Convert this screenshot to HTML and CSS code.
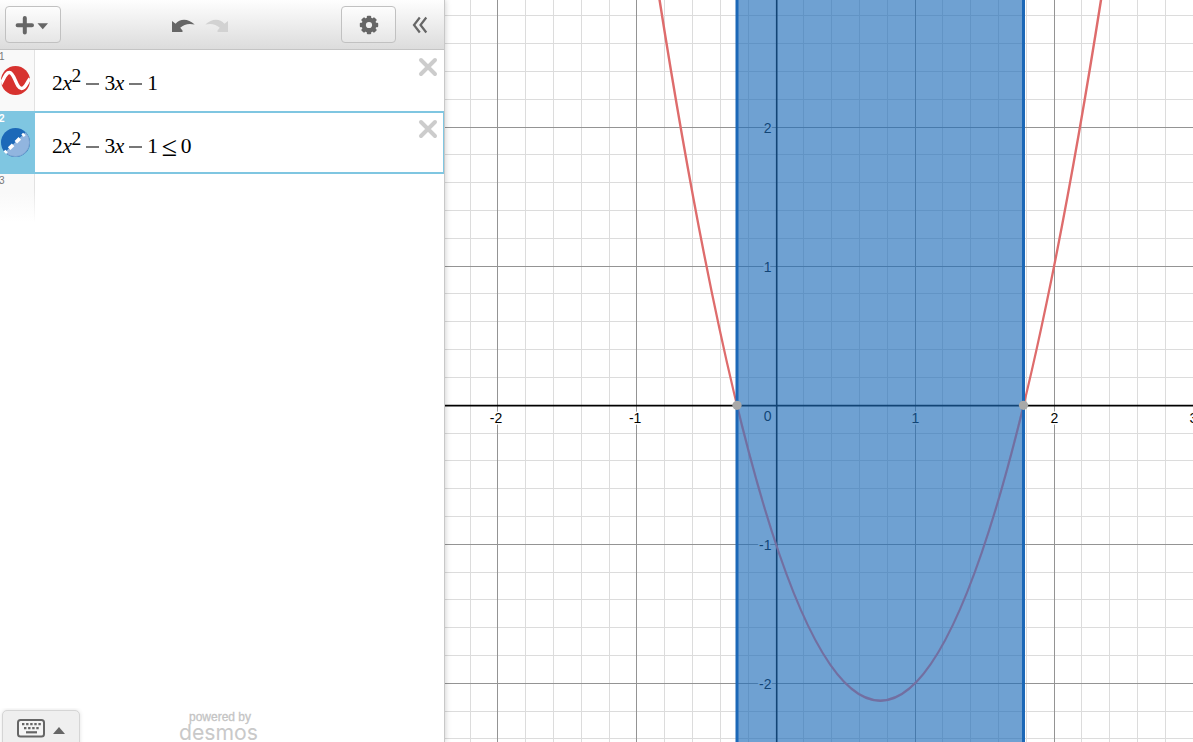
FILE: index.html
```html
<!DOCTYPE html>
<html lang="en">
<head>
<meta charset="utf-8">
<title>Graphing Calculator</title>
<link rel="stylesheet" href="styles.css">
</head>
<body>
<main class="app">
  <aside class="panel">
    <header class="toolbar">
      <button class="btn add" aria-label="Add item">
        <svg width="34" height="20" viewBox="0 0 34 20"><path d="M9.800 3v14.400M2.600 10.200h14.400" stroke="#666" stroke-width="4" stroke-linecap="round" fill="none"/><path d="M22.500 8.200h10.500l-5.250 6z" fill="#666"/></svg>
      </button>
      <div class="history">
        <svg width="23" height="14" viewBox="0 0 23 14"><path d="M0 2L3.600 4.700C8-.6 16-1 22.700 5.600C17 4 12 5.200 8.200 8.800L10.500 11.600V13H0z" fill="#666"/></svg>
        <svg width="23" height="14" viewBox="0 0 23 14"><path transform="translate(23 0) scale(-1 1)" d="M0 2L3.600 4.700C8-.6 16-1 22.700 5.600C17 4 12 5.200 8.200 8.800L10.500 11.600V13H0z" fill="#d2d2d2"/></svg>
      </div>
      <button class="btn settings" aria-label="Settings">
        <svg width="20" height="20" viewBox="-10 -10 20 20"><g fill="#666"><rect id="t" x="-2.200" y="-9.200" width="4.400" height="18.400" rx="1"/><use href="#t" transform="rotate(45)"/><use href="#t" transform="rotate(90)"/><use href="#t" transform="rotate(135)"/><circle r="7.400"/></g><circle r="3.100" fill="#f0f0f0"/></svg>
      </button>
      <svg class="collapse" width="16" height="18" viewBox="0 0 16 18"><path d="M7.800 1.500L2 9l5.800 7.500M14.300 1.500L8.500 9l5.800 7.500" fill="none" stroke="#666" stroke-width="2.200"/></svg>
    </header>

    <section class="row">
      <div class="gutter">
        <span class="num">1</span>
        <svg class="badge" width="31" height="31" viewBox="0 0 31 31"><defs><clipPath id="disc"><circle cx="15.500" cy="15.500" r="14.500"/></clipPath></defs><circle cx="15.500" cy="15.500" r="14.500" fill="#d7322f"/><path clip-path="url(#disc)" d="M.5 19.500C4.500 13 5.500 7.500 9.500 7.500C14.500 7.500 16 23.500 21.500 23.500C25.500 23.500 26.500 18 30 13.500" fill="none" stroke="#fff" stroke-width="3.400"/></svg>
      </div>
      <div class="math"><span class="d">2</span><i>x</i><sup>2</sup><b></b><span class="d">3</span><i>x</i><b class="second"></b><span class="d">1</span></div>
      <svg class="close" width="20" height="20" viewBox="0 0 20 20"><path d="M3 3l14 14M17 3L3 17" stroke="#ccc" stroke-width="4" stroke-linecap="round"/></svg>
    </section>

    <section class="row active">
      <div class="gutter">
        <span class="num">2</span>
        <svg class="badge" width="31" height="31" viewBox="0 0 31 31"><defs><clipPath id="half"><path d="M0 30L31 0V31H0z"/></clipPath></defs><circle cx="15.500" cy="15.500" r="14.500" fill="#1c69b8"/><g clip-path="url(#half)"><circle cx="15.500" cy="15.500" r="14" fill="#91b5df" stroke="#81a8d2"/></g><path d="M4.800 25.800L26.500 5" stroke="#fff" stroke-width="3.600" stroke-dasharray="2.500 3.500 5.500 3.800 5.500 3.800"/></svg>
      </div>
      <div class="math"><span class="d">2</span><i>x</i><sup>2</sup><b></b><span class="d">3</span><i>x</i><b class="second"></b><span class="d">1</span><span class="le">≤</span><span class="d">0</span></div>
      <svg class="close" width="20" height="20" viewBox="0 0 20 20"><path d="M3 3l14 14M17 3L3 17" stroke="#ccc" stroke-width="4" stroke-linecap="round"/></svg>
    </section>

    <section class="row empty"><div class="gutter"><span class="num">3</span></div></section>

    <footer class="footer">
      <div class="keypad">
        <svg width="28" height="19" viewBox="0 0 28 19"><rect x="1" y="1" width="26" height="16.500" rx="2.500" fill="#f5f5f5" stroke="#666" stroke-width="2"/><path d="M5 5.200h19M7 9.200h15" stroke="#666" stroke-width="2.200" stroke-dasharray="2.400 1.700"/><path d="M9 13.300h11" stroke="#666" stroke-width="2.200"/></svg>
        <svg width="12" height="7" viewBox="0 0 12 7"><path d="M0 7L6 0l6 7z" fill="#666"/></svg>
      </div>
      <div class="brand">
        <span class="powered">powered by</span>
        <svg width="82" height="22" viewBox="0 0 82 22"><text class="logo" x="0" y="19" textLength="79" lengthAdjust="spacingAndGlyphs">desmos</text></svg>
      </div>
    </footer>
  </aside>

  <svg class="graph" id="graph" width="748" height="742" viewBox="445 0 748 742">
    <g id="grid" shape-rendering="crispEdges"></g>
    <path d="M445 405.600H1193M776.700 0V742" stroke="#000" stroke-width="1.600"/>
    <g id="labels"></g>
    <path d="M609.140 -356.790Q880.290 1758.160 1151.430 -356.790" fill="none" stroke="#de6c6c" stroke-width="2.500"/>
    <rect x="737" width="286.500" height="742" fill="#1c6bb8" fill-opacity=".635"/>
    <clipPath id="band"><rect x="737" width="286.500" height="742"/></clipPath>
    <path d="M609.140 -356.790Q880.290 1758.160 1151.430 -356.790" fill="none" stroke="#a07bb0" stroke-opacity=".25" stroke-width="2.800" clip-path="url(#band)"/>
    <path d="M737 0V742M1023.500 0V742" stroke="#1c68b7" stroke-width="3"/>
    <circle cx="737" cy="405.300" r="4.600" fill="#a9a9a9"/>
    <circle cx="1023.500" cy="405.300" r="4.600" fill="#a9a9a9"/>
  </svg>
</main>
<script src="graph.js"></script>
</body>
</html>
```
FILE: styles.css
```css
* { box-sizing: border-box; }
body { margin: 0; background: #fff; font-family: "Liberation Sans", Arial, sans-serif; overflow: hidden; }
svg { display: block; flex: none; }
.app { display: flex; width: 1193px; height: 742px; }
.panel { position: relative; z-index: 1; display: flex; flex-direction: column; flex: none; width: 445px; height: 742px; background: #fff; border-right: 1px solid #c8c8c8; box-shadow: 0 0 6px rgba(0,0,0,.22); }
.toolbar { display: flex; align-items: center; flex: none; height: 50px; padding: 0 0 1px 5px; background: linear-gradient(#fefefe, #dcdcdc); border-bottom: 1px solid #c4c4c4; }
.btn { display: flex; align-items: center; justify-content: center; height: 37px; padding: 0; border: 1px solid #c1c1c1; border-radius: 4px; background: linear-gradient(#fdfdfd, #e6e6e6); }
.add { width: 56px; }
.add svg { margin: 1px 3px 0 0; }
.history { display: flex; gap: 10px; margin-left: 111px; padding-top: 3px; }
.settings { width: 55px; margin-left: 113px; }
.settings svg { margin-top: 1px; }
.collapse { margin: 2px 0 0 16px; }
.row { display: flex; flex: none; height: 61px; }
.gutter { width: 35px; flex: none; padding-top: 1px; background: #f9f9f9; border-right: 1px solid #e2e2e2; }
.num { display: block; height: 14px; margin-left: -1px; font-size: 10px; line-height: 12px; color: #777; }
.math { display: flex; align-items: baseline; flex: 1; padding: 20px 0 0 17px; font: 21.500px/26px "Liberation Serif", "Times New Roman", serif; color: #000; }
.math .d { width: 10.400px; }
.math i { width: 9px; }
.math sup { width: 10px; font-size: 19.500px; line-height: 20px; position: relative; top: -8px; vertical-align: baseline; }
.math b { width: 13px; height: 1.500px; margin: 0 5.500px 0 4.500px; align-self: flex-start; transform: translateY(13px); background: #777; }
.math b.second { margin-left: 5px; }
.math .le { width: 16px; margin: 0 3px 0 4px; font-size: 28px; line-height: 20px; transform: translateY(3px); }
.close { margin: 7px 6.500px 0 0; }
.active { height: 63px; border: 2px solid #7fc6e1; border-width: 2px 1px 2px 0; }
.active .gutter { padding-top: 0; background: #7fc6e1; border-color: #7fc6e1; }
.active .num { color: #fff; font-weight: bold; }
.active .math { padding-top: 20px; }
.active .close { margin-right: 5.500px; margin-top: 6px; }
.empty { height: 48px; }
.empty .gutter { background: linear-gradient(#f9f9f9 40%, #fff); border-image: linear-gradient(#e2e2e2 30%, #fff) 1; }
.footer { display: flex; align-items: flex-start; margin-top: auto; height: 34px; padding-left: 2px; overflow: hidden; }
.keypad { display: flex; align-items: center; gap: 8px; width: 78px; height: 40px; padding: 0 0 4px 14px; margin-top: 2px; background: #efefef; border: 1px solid #d5d5d5; border-radius: 5px; box-shadow: 0 0 4px rgba(0,0,0,.12); }
.keypad svg + svg { margin-top: 4px; }
.brand { display: flex; flex-direction: column; margin-left: 99px; padding-top: 2px; }
.powered { height: 11px; margin-left: 10px; font-size: 12px; line-height: 14px; color: #c4c4c4; -webkit-text-stroke: .3px #c4c4c4; }
.logo { font: 22px Inter, sans-serif; fill: #c9c9c9; }
.graph { overflow: hidden; background: #fff; }
.label { font-size: 14px; fill: #000; stroke: #fff; stroke-width: 3px; paint-order: stroke; }
```
FILE: graph.js
```js
const NS = 'http://www.w3.org/2000/svg';
const unit = 139.05, originX = 776.0, originY = 405.2;

function add(parent, tag, attrs, text) {
  const el = document.createElementNS(NS, tag);
  for (const key in attrs) el.setAttribute(key, attrs[key]);
  if (text) el.textContent = text;
  document.getElementById(parent).appendChild(el);
}

// Minor lines first so the major ones stay on top.
for (const major of [false, true]) {
  for (let k = -15; k <= 15; k++) {
    if ((k % 5 === 0) !== major || k === 0) continue;
    const stroke = major ? '#949494' : '#dcdcdc';
    const x = Math.floor(originX + unit * k / 5 + 0.001) + 0.5;
    const y = Math.floor(originY + unit * k / 5) + 0.5;
    add('grid', 'path', { d: `M${x} 0V742`, stroke });
    add('grid', 'path', { d: `M445 ${y}H1193`, stroke });
  }
}

for (const n of [-2, -1, 1, 2, 3]) {
  const shift = n < 0 ? -1.8 : 0.3;
  add('labels', 'text', { class: 'label', 'text-anchor': 'middle', x: originX + unit * n + shift, y: 423 }, String(n));
}
for (const n of [-2, -1, 1, 2]) {
  add('labels', 'text', { class: 'label', 'text-anchor': 'end', x: 771.5, y: Math.round(originY - unit * n) + 6 }, String(n));
}
add('labels', 'text', { class: 'label', 'text-anchor': 'end', x: 771.5, y: 421 }, '0');
```
